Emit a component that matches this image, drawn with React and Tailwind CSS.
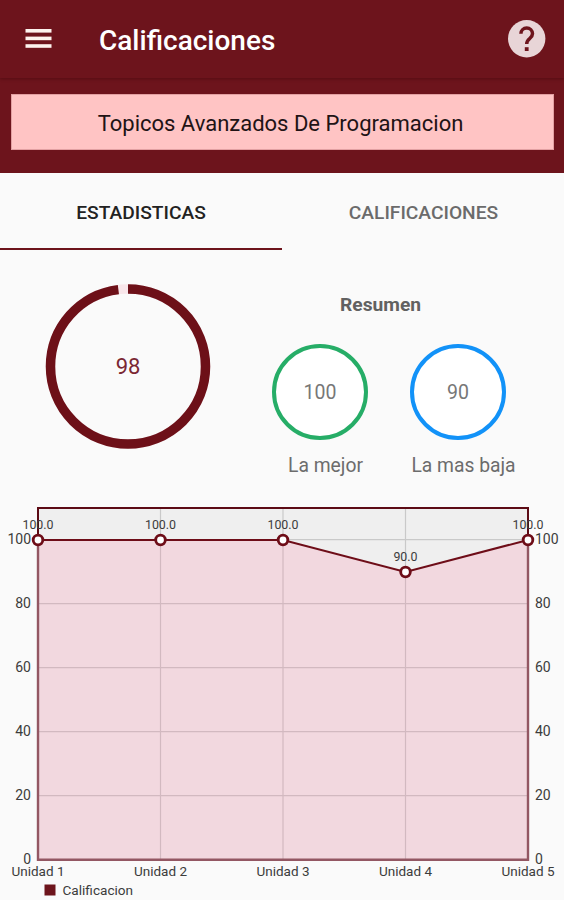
const UNITS = [
  { label: "Unidad 1", value: 100 },
  { label: "Unidad 2", value: 100 },
  { label: "Unidad 3", value: 100 },
  { label: "Unidad 4", value: 90 },
  { label: "Unidad 5", value: 100 },
];
const TICKS = [0, 20, 40, 60, 80, 100];
const LEFT = 38;
const RIGHT = 528;
const TOP = 8;
const BOTTOM = 360;

const xAt = (i) => LEFT + (i * (RIGHT - LEFT)) / (UNITS.length - 1);
const yAt = (v) => BOTTOM - v * 3.2;

function Header() {
  return (
    <header className="relative flex h-[78px] items-center bg-[#6d141c] pr-[18px] pl-[25px] shadow-[0_1px_3px_rgba(50,0,5,0.4)]">
      <svg className="h-[20px] w-[27px]" viewBox="0 0 27 20" fill="#fdf3ee">
        <rect x="0.5" y="0" width="26" height="3.6" />
        <rect x="0.5" y="7.6" width="26" height="3.6" />
        <rect x="0.5" y="15.2" width="26" height="3.6" />
      </svg>
      <h1 className="mt-[4px] ml-[47px] text-[28px] font-medium text-white">Calificaciones</h1>
      <svg className="ml-auto h-[38px] w-[38px]" viewBox="0 0 38 38">
        <circle cx="18.7" cy="18.7" r="18.7" fill="#e8d5d7" />
        <path d="M12.9 13.8a5.8 5.8 0 1 1 11.6 0c0 4.8-5.8 4.7-5.8 10.2" fill="none" stroke="#6d141c" strokeWidth="3.5" />
        <rect x="16.8" y="27.2" width="3.8" height="3.8" fill="#6d141c" />
      </svg>
    </header>
  );
}

function Grade({ value, label, ring }) {
  return (
    <div className="flex w-24 flex-col items-center">
      <div className={`flex h-24 w-24 items-center justify-center rounded-full border-4 bg-white pt-[2px] text-[19.5px] text-[#777] ${ring}`}>
        {value}
      </div>
      <span className="mt-[14px] ml-[11px] text-[19.3px] leading-6 whitespace-nowrap text-[#6c6c6c]">{label}</span>
    </div>
  );
}

function Chart() {
  const line = UNITS.map((u, i) => `${xAt(i)},${yAt(u.value)}`).join(" ");
  return (
    <svg className="block h-[400px] w-full" viewBox="0 0 564 400">
      <rect x={LEFT} y={TOP} width={RIGHT - LEFT} height={BOTTOM - TOP} fill="#efefef" />
      {TICKS.map((t) => (
        <line key={t} x1={LEFT} x2={RIGHT} y1={yAt(t) - 0.3} y2={yAt(t) - 0.3} stroke="#c9c9c9" strokeWidth="1.2" />
      ))}
      {UNITS.map((u, i) => (
        <line key={u.label} x1={xAt(i)} x2={xAt(i)} y1={TOP} y2={BOTTOM} stroke="#c9c9c9" strokeWidth="1.2" />
      ))}
      <rect x={LEFT} y={TOP} width={RIGHT - LEFT} height={BOTTOM - TOP} fill="none" stroke="#5c0b15" strokeWidth="2" />
      <polygon points={`${LEFT},${BOTTOM} ${line} ${RIGHT},${BOTTOM}`} fill="#f2d8df" />
      {TICKS.slice(0, 5).map((t) => (
        <line key={t} x1={LEFT} x2={RIGHT} y1={yAt(t) - 0.3} y2={yAt(t) - 0.3} stroke="#d2b9c0" strokeWidth="1.2" />
      ))}
      {UNITS.map((u, i) => (
        <line key={u.label} x1={xAt(i)} x2={xAt(i)} y1={yAt(u.value)} y2={BOTTOM} stroke="#d2b9c0" strokeWidth="1.2" />
      ))}
      <path d={`M${LEFT} ${yAt(100)}V${BOTTOM - 0.3}H${RIGHT}V${yAt(100)}`} fill="none" stroke="#935763" strokeWidth="2.4" />
      <polyline points={line} fill="none" stroke="#6e0d18" strokeWidth="2.1" />
      <g fill="#3c3c3c">
        {TICKS.map((t) => (
          <g key={t} fontSize="14">
            <text x="31" y={yAt(t) + 4.2} textAnchor="end">{t}</text>
            <text x="535" y={yAt(t) + 4.2}>{t}</text>
          </g>
        ))}
        {UNITS.map((u, i) => (
          <g key={u.label}>
            <text x={xAt(i)} y={yAt(u.value) - 11} textAnchor="middle" fontSize="12.4">{u.value.toFixed(1)}</text>
            <text x={xAt(i)} y="376" textAnchor="middle" fontSize="13.5">{u.label}</text>
          </g>
        ))}
        <rect x="44.5" y="384.5" width="11" height="11" fill="#6d141c" />
        <text x="62.5" y="395.3" fontSize="13.6">Calificacion</text>
      </g>
      {UNITS.map((u, i) => (
        <circle key={u.label} cx={xAt(i)} cy={yAt(u.value)} r="4.8" fill="#fff" stroke="#6e0d18" strokeWidth="2.8" />
      ))}
    </svg>
  );
}

export default function App() {
  return (
    <div className="flex h-[900px] w-full flex-col overflow-hidden bg-[#fafafa] font-[Roboto,sans-serif]">
      <Header />
      <section className="h-[95px] bg-[#6d141c] pt-[16px] pr-[10px] pl-[11px]">
        <div className="flex h-[56px] items-center justify-center border border-[#e2a0a2] bg-[#ffc4c4] pt-[2px] pr-[4px] text-[22px] text-[#211315]">
          Topicos Avanzados De Programacion
        </div>
      </section>
      <nav className="grid h-[77px] grid-cols-2 text-center text-[19.2px] leading-[79px] font-medium">
        <div className="h-[77px] border-b-2 border-[#6d141c] text-[#222]">ESTADISTICAS</div>
        <div className="h-[77px] pl-px text-[#6b6b6b]">CALIFICACIONES</div>
      </nav>
      <main className="flex h-[250px]">
        <div className="pt-[33px] pl-[45px]">
          <div className="grid h-[166px] w-[166px] place-items-center">
            <svg className="col-start-1 row-start-1 h-full w-full" viewBox="0 0 166 166">
              <circle cx="83" cy="83.5" r="77.5" fill="none" stroke="#f8e6ea" strokeWidth="9.5" />
              <circle cx="83" cy="83.5" r="77.5" fill="none" stroke="#6d1018" strokeWidth="9.5" pathLength="100" strokeDasharray="98 2" transform="rotate(-90 83 83.5)" />
            </svg>
            <span className="col-start-1 row-start-1 text-[22px] text-[#7a2732]">98</span>
          </div>
        </div>
        <div className="ml-[61px] flex flex-col">
          <h2 className="mt-[43px] pr-[17px] text-center text-[19.2px] leading-6 font-bold text-[#616161]">Resumen</h2>
          <div className="mt-[27px] flex gap-[42px]">
            <Grade value="100" label="La mejor" ring="border-[#26ad67]" />
            <Grade value="90" label="La mas baja" ring="border-[#1292f8]" />
          </div>
        </div>
      </main>
      <Chart />
    </div>
  );
}
